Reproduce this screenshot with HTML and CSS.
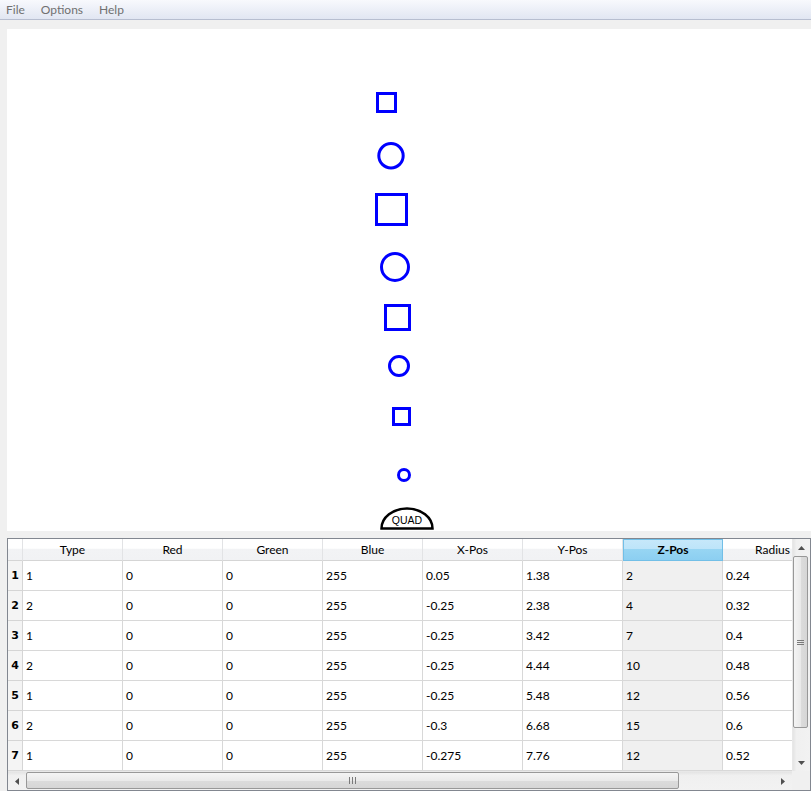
FILE: index.html
```html
<!DOCTYPE html>
<html>
<head>
<meta charset="utf-8">
<title>Shapes</title>
<link rel="stylesheet" href="styles.css">
</head>
<body>
<div class="menubar">
  <span class="menu">File</span>
  <span class="menu">Options</span>
  <span class="menu">Help</span>
</div>
<main class="main">
  <div class="canvas">
    <svg width="804" height="502" viewBox="0 0 804 502">
      <g class="shape">
        <rect x="370.5" y="64.5" width="18" height="18"/>
        <circle cx="384" cy="126.7" r="12.2"/>
        <rect x="369.5" y="165.5" width="30" height="30"/>
        <circle cx="388" cy="238" r="13.5"/>
        <rect x="378.5" y="276.5" width="24" height="24"/>
        <circle cx="392" cy="337" r="9.5"/>
        <rect x="386.5" y="379.5" width="16" height="16"/>
        <circle cx="397" cy="446" r="5.5"/>
      </g>
      <path class="quad" d="M374.5 499.5 A25.5 20 0 0 1 425.5 499.5 Z"/>
      <text class="quad-label" x="400" y="494.5" text-anchor="middle">QUAD</text>
    </svg>
  </div>
  <div class="table">
    <div class="viewport">
      <div class="rows">
        <div class="h corner"></div>
        <div class="h">Type</div>
        <div class="h">Red</div>
        <div class="h">Green</div>
        <div class="h">Blue</div>
        <div class="h">X-Pos</div>
        <div class="h">Y-Pos</div>
        <div class="h sel">Z-Pos</div>
        <div class="h">Radius</div>

        <div class="rh">1</div><div class="c">1</div><div class="c">0</div><div class="c">0</div><div class="c">255</div><div class="c">0.05</div><div class="c">1.38</div><div class="c z">2</div><div class="c">0.24</div>
        <div class="rh">2</div><div class="c">2</div><div class="c">0</div><div class="c">0</div><div class="c">255</div><div class="c">-0.25</div><div class="c">2.38</div><div class="c z">4</div><div class="c">0.32</div>
        <div class="rh">3</div><div class="c">1</div><div class="c">0</div><div class="c">0</div><div class="c">255</div><div class="c">-0.25</div><div class="c">3.42</div><div class="c z">7</div><div class="c">0.4</div>
        <div class="rh">4</div><div class="c">2</div><div class="c">0</div><div class="c">0</div><div class="c">255</div><div class="c">-0.25</div><div class="c">4.44</div><div class="c z">10</div><div class="c">0.48</div>
        <div class="rh">5</div><div class="c">1</div><div class="c">0</div><div class="c">0</div><div class="c">255</div><div class="c">-0.25</div><div class="c">5.48</div><div class="c z">12</div><div class="c">0.56</div>
        <div class="rh">6</div><div class="c">2</div><div class="c">0</div><div class="c">0</div><div class="c">255</div><div class="c">-0.3</div><div class="c">6.68</div><div class="c z">15</div><div class="c">0.6</div>
        <div class="rh">7</div><div class="c">1</div><div class="c">0</div><div class="c">0</div><div class="c">255</div><div class="c">-0.275</div><div class="c">7.76</div><div class="c z">12</div><div class="c">0.52</div>
      </div>
    </div>
    <div class="vscroll">
      <div class="arrow"><svg width="7" height="4"><polygon points="0,4 3.5,0 7,4"/></svg></div>
      <div class="vthumb"><svg width="7" height="5"><rect x="0" y="0" width="7" height="1"/><rect x="0" y="2" width="7" height="1"/><rect x="0" y="4" width="7" height="1"/></svg></div>
      <div class="vtrack"></div>
      <div class="arrow"><svg width="7" height="4"><polygon points="0,0 7,0 3.5,4"/></svg></div>
    </div>
    <div class="hscroll">
      <div class="arrow h-arrow"><svg width="4" height="7"><polygon points="4,0 4,7 0,3.5"/></svg></div>
      <div class="hthumb"><svg width="7" height="7"><rect x="0" y="0" width="1" height="7"/><rect x="3" y="0" width="1" height="7"/><rect x="6" y="0" width="1" height="7"/></svg></div>
      <div class="htrack"></div>
      <div class="arrow h-arrow"><svg width="4" height="7"><polygon points="0,0 4,3.5 0,7"/></svg></div>
    </div>
    <div class="sizer"></div>
  </div>
</main>
</body>
</html>
```

FILE: styles.css
```css
* { box-sizing: border-box; }
html, body { margin: 0; padding: 0; }
body {
  width: 811px;
  height: 791px;
  overflow: hidden;
  background: #f0f0f0;
  font-family: Lato, "Noto Sans", sans-serif;
  font-size: 12px;
  color: #000;
}

.menubar {
  height: 20px;
  display: flex;
  align-items: center;
  gap: 16px;
  padding-left: 6px;
  background: linear-gradient(#f8f9fd, #e1e6f2);
  border-bottom: 1px solid #b7bed0;
  color: #707070;
}

.main { padding: 9px 0 0 7px; }

.canvas { width: 804px; height: 502px; background: #fff; }
.canvas svg { display: block; }
.shape rect, .shape circle { fill: none; stroke: #0000ff; stroke-width: 3; }
.quad { fill: none; stroke: #000; stroke-width: 2.5; }
.quad-label { font-family: "Liberation Sans", Arial, sans-serif; font-size: 10.5px; fill: #000; }

.table {
  margin-top: 7px;
  width: 804px;
  height: 253px;
  border: 1px solid #828790;
  background: #fff;
  display: grid;
  grid-template-columns: 784px 18px;
  grid-template-rows: 232px 19px;
}

.viewport { overflow: hidden; }
.rows {
  display: grid;
  grid-template-columns: 15px repeat(8, 100px);
  width: 815px;
}

.h {
  height: 22px;
  line-height: 21px;
  text-align: center;
  white-space: nowrap;
  border-right: 1px solid #e2e3e5;
  border-bottom: 1px solid #d5d5d5;
  background: linear-gradient(#ffffff 0%, #ffffff 45%, #f2f3f5 46%, #f1f2f4 100%);
}
.h.sel {
  font-weight: 700;
  background: linear-gradient(#c6e8fa 0%, #bde4f9 45%, #97d5f3 46%, #8ccff1 100%);
  border: 1px solid #72bfe7;
  line-height: 19px;
}

.rh {
  height: 30px;
  line-height: 29px;
  text-align: center;
  font-family: "DejaVu Sans", sans-serif;
  font-weight: 700;
  font-size: 11px;
  background: #f4f4f4;
  border-right: 1px solid #d5d5d5;
  border-bottom: 1px solid #d5d5d5;
}

.c {
  height: 30px;
  line-height: 29px;
  padding-left: 3px;
  white-space: nowrap;
  overflow: hidden;
  border-right: 1px solid #d8d8d8;
  border-bottom: 1px solid #d8d8d8;
}
.c.z { background: #f0f0f0; }

.vscroll {
  display: flex;
  flex-direction: column;
  background: linear-gradient(to right, #e4e4e4, #f0f0f0 20%, #f2f2f2);
  border-left: 1px solid #e8e8e8;
}
.arrow {
  flex: 0 0 17px;
  display: flex;
  align-items: center;
  justify-content: center;
}
.arrow svg { display: block; fill: #505050; }
.vthumb {
  height: 172px;
  margin: 0 2px 0 0;
  border: 1px solid #989898;
  border-radius: 2px;
  background: linear-gradient(to right, #f4f4f4, #eaeaea 50%, #dcdcdc 51%, #d6d6d6);
  display: flex;
  align-items: center;
  justify-content: center;
}
.vthumb svg, .hthumb svg { display: block; fill: #7a7a7a; }
.vtrack { flex: 1; }

.hscroll {
  display: flex;
  background: linear-gradient(#e4e4e4, #f0f0f0 20%, #f2f2f2);
  border-top: 1px solid #e8e8e8;
}
.h-arrow { flex: 0 0 18px; }
.hthumb {
  width: 653px;
  margin: 0 0 1px 0;
  border: 1px solid #989898;
  border-radius: 2px;
  background: linear-gradient(#f4f4f4, #eaeaea 50%, #dcdcdc 51%, #d6d6d6);
  display: flex;
  align-items: center;
  justify-content: center;
}
.htrack { flex: 1; }

.sizer { background: #f0f0f0; }
```
